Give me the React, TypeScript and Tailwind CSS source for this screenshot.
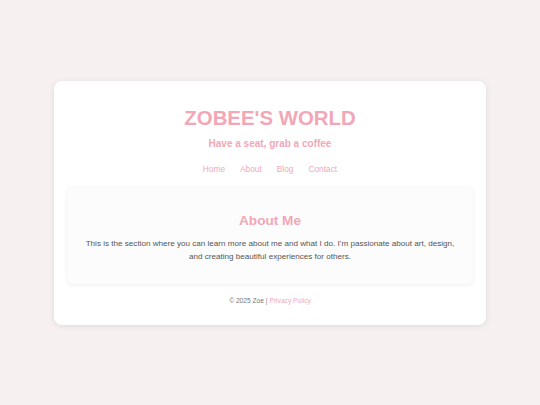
import React from "react";

export default function App() {
  return (
    <div
      className="min-h-screen w-full flex items-center justify-center bg-[#f6f1f0]"
      style={{ fontFamily: '"Liberation Sans", Arial, sans-serif' }}
    >
      <div className="w-[432px] bg-white rounded-[8px] shadow-[0_1px_6px_rgba(0,0,0,0.09)] px-[13px] pt-[13px] pb-[20px] flex flex-col items-center">
        <h1 className="mt-[13px] text-[20.4px] leading-[23px] font-bold text-[#f2a7b6] text-center">
          ZOBEE'S WORLD
        </h1>
        <p className="mt-[8px] text-[10px] leading-[12px] font-bold text-[#f2a7b6] text-center">
          Have a seat, grab a coffee
        </p>
        <nav className="mt-[14px] flex gap-[15px] text-[8.33px] leading-[10px] text-[#f1a9bb]">
          <span>Home</span>
          <span>About</span>
          <span>Blog</span>
          <span>Contact</span>
        </nav>
        <section className="mt-[13px] w-full bg-[#fcfcfc] rounded-[5px] shadow-[0_1px_4px_rgba(0,0,0,0.07)] px-[16px] pt-[26px] pb-[21px] flex flex-col items-center">
          <h2 className="text-[13.6px] leading-[16px] font-bold text-[#f2a7b6]">About Me</h2>
          <p className="mt-[8px] text-[8.1px] leading-[13px] text-[#555555] text-center">
            This is the section where you can learn more about me and what I do. I'm passionate about art, design, and creating beautiful experiences for others.
          </p>
        </section>
        <footer className="mt-[13px] text-[6.67px] leading-[8px] text-[#777777]">
          © 2025 Zoe | <span className="text-[#f1a9bb]">Privacy Policy</span>
        </footer>
      </div>
    </div>
  );
}
